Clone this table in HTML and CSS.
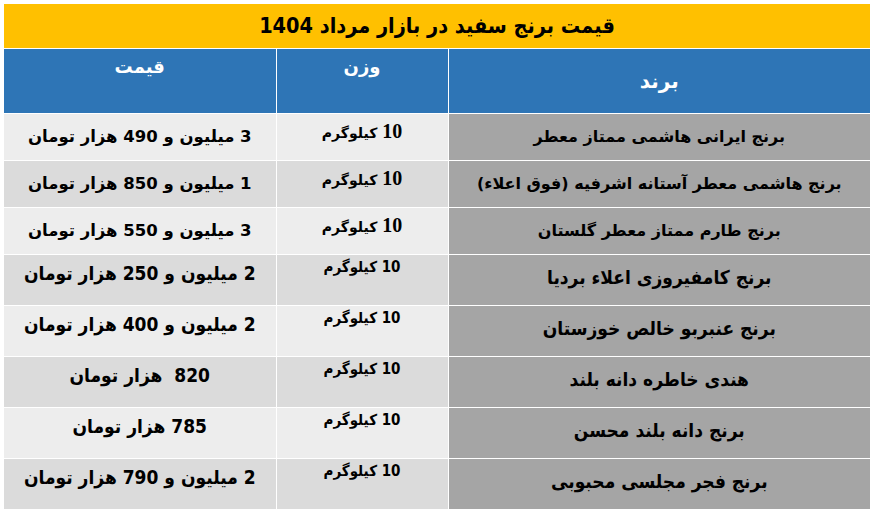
FILE: index.html
```html
<!DOCTYPE html>
<html lang="fa" dir="rtl">
<head>
<meta charset="utf-8">
<title>قیمت برنج سفید</title>
<link rel="stylesheet" href="styles.css">
</head>
<body>
<table class="price-table">
  <colgroup>
    <col class="col-brand">
    <col class="col-weight">
    <col class="col-price">
  </colgroup>
  <thead>
    <tr class="title-row"><th colspan="3" class="title">قیمت برنج سفید در بازار مرداد 1404</th></tr>
    <tr class="head-row">
      <th class="h-brand">برند</th>
      <th class="h-top">وزن</th>
      <th class="h-top">قیمت</th>
    </tr>
  </thead>
  <tbody>
    <tr class="r-a odd">
      <td class="brand">برنج ایرانی هاشمی ممتاز معطر</td>
      <td class="weight"><span class="num">10</span> کیلوگرم</td>
      <td class="price">3 میلیون و 490 هزار تومان</td>
    </tr>
    <tr class="r-a even">
      <td class="brand">برنج هاشمی معطر آستانه اشرفیه (فوق اعلاء)</td>
      <td class="weight"><span class="num">10</span> کیلوگرم</td>
      <td class="price">1 میلیون و 850 هزار تومان</td>
    </tr>
    <tr class="r-a odd">
      <td class="brand">برنج طارم ممتاز معطر گلستان</td>
      <td class="weight"><span class="num">10</span> کیلوگرم</td>
      <td class="price">3 میلیون و 550 هزار تومان</td>
    </tr>
    <tr class="r-b even">
      <td class="brand">برنج کامفیروزی اعلاء بردیا</td>
      <td class="weight">10 کیلوگرم</td>
      <td class="price">2 میلیون و 250 هزار تومان</td>
    </tr>
    <tr class="r-b odd">
      <td class="brand">برنج عنبربو خالص خوزستان</td>
      <td class="weight">10 کیلوگرم</td>
      <td class="price">2 میلیون و 400 هزار تومان</td>
    </tr>
    <tr class="r-b even">
      <td class="brand">هندی خاطره دانه بلند</td>
      <td class="weight">10 کیلوگرم</td>
      <td class="price">820&nbsp; هزار تومان</td>
    </tr>
    <tr class="r-b odd">
      <td class="brand">برنج دانه بلند محسن</td>
      <td class="weight">10 کیلوگرم</td>
      <td class="price">785 هزار تومان</td>
    </tr>
    <tr class="r-b even">
      <td class="brand">برنج فجر مجلسی محبوبی</td>
      <td class="weight">10 کیلوگرم</td>
      <td class="price">2 میلیون و 790 هزار تومان</td>
    </tr>
  </tbody>
</table>
</body>
</html>
```

FILE: styles.css
```css
html, body {
  margin: 0;
  padding: 0;
  background: #ffffff;
}
body {
  padding: 4px 4px 0 4px;
  font-family: "DejaVu Sans", sans-serif;
  color: #000;
}
.price-table {
  width: 866px;
  border-collapse: collapse;
  table-layout: fixed;
  direction: rtl;
}
.col-brand { width: 422px; }
.col-weight { width: 172px; }
.col-price { width: 272px; }

.price-table th,
.price-table td {
  border: 1px solid #ffffff;
  padding: 0;
  text-align: center;
  font-weight: bold;
  white-space: nowrap;
  line-height: 1.15;
}
.price-table tr:first-child th { border-top: none; }
.price-table th:first-child, .price-table td:first-child { border-right: none; }
.price-table th:last-child, .price-table td:last-child { border-left: none; }

.title {
  background: #ffc000;
  height: 44px;
  font-family: "DejaVu Sans Condensed", "DejaVu Sans", sans-serif;
  font-size: 21.5px;
  vertical-align: middle;
}
.head-row th {
  background: #2e75b6;
  color: #ffffff;
  font-size: 18px;
}
.head-row .h-brand {
  vertical-align: top;
  padding-top: 21px;
  height: 43px;
  font-size: 20px;
}
.head-row .h-top {
  vertical-align: top;
  padding-top: 8px;
  height: 56px;
}

.r-a td { height: 46px; }
.r-a td.weight { height: 40px; padding-top: 6px; }
.odd .weight, .odd .price { background: #ededed; }
.even .weight, .even .price { background: #dbdbdb; }
.brand {
  background: #a5a5a5;
  font-size: 16px;
  vertical-align: middle;
}
.price {
  font-size: 16.5px;
  vertical-align: middle;
}
.weight {
  vertical-align: top;
  font-size: 14px;
}
.weight .num {
  font-family: "Liberation Serif", serif;
  font-size: 20px;
}
.r-b td {
  font-family: "DejaVu Sans Condensed", "DejaVu Sans", sans-serif;
  vertical-align: top;
}
.r-b .price { font-size: 19px; padding-top: 8px; height: 42px; }
.r-b .brand { font-size: 19px; padding-top: 12px; height: 38px; }
.r-b .weight { font-size: 15px; padding-top: 4px; height: 46px; }
```
